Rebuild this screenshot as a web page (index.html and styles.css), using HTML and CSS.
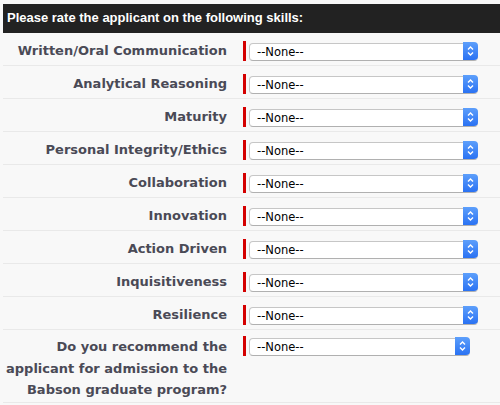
FILE: index.html
```html
<!DOCTYPE html>
<html>
<head>
<meta charset="utf-8">
<link rel="stylesheet" href="styles.css">
</head>
<body>
<div class="section">
  <h3 class="section-title">Please rate the applicant on the following skills:</h3>
  <div class="rows">
    <div class="row"><label class="lbl">Written/Oral Communication</label><div class="field"><span class="req"></span><div class="sel"><select><option>--None--</option></select><span class="btn"><svg width="15" height="18" viewBox="0 0 15 18"><path d="M5 7.5 L7.5 5 L10 7.5 M5 10.5 L7.5 13 L10 10.5" fill="none" stroke="#fff" stroke-width="1.4"/></svg></span></div></div></div>
    <div class="row"><label class="lbl">Analytical Reasoning</label><div class="field"><span class="req"></span><div class="sel"><select><option>--None--</option></select><span class="btn"><svg width="15" height="18" viewBox="0 0 15 18"><path d="M5 7.5 L7.5 5 L10 7.5 M5 10.5 L7.5 13 L10 10.5" fill="none" stroke="#fff" stroke-width="1.4"/></svg></span></div></div></div>
    <div class="row"><label class="lbl">Maturity</label><div class="field"><span class="req"></span><div class="sel"><select><option>--None--</option></select><span class="btn"><svg width="15" height="18" viewBox="0 0 15 18"><path d="M5 7.5 L7.5 5 L10 7.5 M5 10.5 L7.5 13 L10 10.5" fill="none" stroke="#fff" stroke-width="1.4"/></svg></span></div></div></div>
    <div class="row"><label class="lbl">Personal Integrity/Ethics</label><div class="field"><span class="req"></span><div class="sel"><select><option>--None--</option></select><span class="btn"><svg width="15" height="18" viewBox="0 0 15 18"><path d="M5 7.5 L7.5 5 L10 7.5 M5 10.5 L7.5 13 L10 10.5" fill="none" stroke="#fff" stroke-width="1.4"/></svg></span></div></div></div>
    <div class="row"><label class="lbl">Collaboration</label><div class="field"><span class="req"></span><div class="sel"><select><option>--None--</option></select><span class="btn"><svg width="15" height="18" viewBox="0 0 15 18"><path d="M5 7.5 L7.5 5 L10 7.5 M5 10.5 L7.5 13 L10 10.5" fill="none" stroke="#fff" stroke-width="1.4"/></svg></span></div></div></div>
    <div class="row"><label class="lbl">Innovation</label><div class="field"><span class="req"></span><div class="sel"><select><option>--None--</option></select><span class="btn"><svg width="15" height="18" viewBox="0 0 15 18"><path d="M5 7.5 L7.5 5 L10 7.5 M5 10.5 L7.5 13 L10 10.5" fill="none" stroke="#fff" stroke-width="1.4"/></svg></span></div></div></div>
    <div class="row"><label class="lbl">Action Driven</label><div class="field"><span class="req"></span><div class="sel"><select><option>--None--</option></select><span class="btn"><svg width="15" height="18" viewBox="0 0 15 18"><path d="M5 7.5 L7.5 5 L10 7.5 M5 10.5 L7.5 13 L10 10.5" fill="none" stroke="#fff" stroke-width="1.4"/></svg></span></div></div></div>
    <div class="row"><label class="lbl">Inquisitiveness</label><div class="field"><span class="req"></span><div class="sel"><select><option>--None--</option></select><span class="btn"><svg width="15" height="18" viewBox="0 0 15 18"><path d="M5 7.5 L7.5 5 L10 7.5 M5 10.5 L7.5 13 L10 10.5" fill="none" stroke="#fff" stroke-width="1.4"/></svg></span></div></div></div>
    <div class="row"><label class="lbl">Resilience</label><div class="field"><span class="req"></span><div class="sel"><select><option>--None--</option></select><span class="btn"><svg width="15" height="18" viewBox="0 0 15 18"><path d="M5 7.5 L7.5 5 L10 7.5 M5 10.5 L7.5 13 L10 10.5" fill="none" stroke="#fff" stroke-width="1.4"/></svg></span></div></div></div>
    <div class="row row-tall"><label class="lbl">Do you recommend the applicant for admission to the Babson graduate program?</label><div class="field"><span class="req"></span><div class="sel sel-narrow"><select><option>--None--</option></select><span class="btn"><svg width="15" height="18" viewBox="0 0 15 18"><path d="M5 7.5 L7.5 5 L10 7.5 M5 10.5 L7.5 13 L10 10.5" fill="none" stroke="#fff" stroke-width="1.4"/></svg></span></div></div></div>
  </div>
</div>
</body>
</html>
```
FILE: styles.css
```css
html, body {
  margin: 0;
  padding: 0;
  background: #f8f8f8;
}
.section {
  margin: 4px 0 0 3px;
}
.section-title {
  margin: 0;
  height: 29px;
  line-height: 27px;
  padding-left: 4px;
  background: #222222;
  color: #ffffff;
  font-family: "Liberation Sans", Arial, sans-serif;
  font-weight: bold;
  font-size: 13px;
}
.row {
  display: flex;
  align-items: flex-start;
  padding: 8px 0 4px;
  border-bottom: 1px solid #e9e9e9;
}
.lbl {
  width: 224px;
  padding-right: 16px;
  text-align: right;
  font-family: "DejaVu Sans", Verdana, sans-serif;
  font-weight: bold;
  font-size: 13px;
  line-height: 19px;
  color: #4a4a56;
}
.field {
  display: flex;
  align-items: flex-start;
  gap: 3px;
}
.req {
  display: block;
  width: 3px;
  height: 20px;
  background: #d40000;
}
.sel {
  position: relative;
  width: 229px;
  height: 18px;
  margin-top: 1px;
}
.sel-narrow {
  width: 221px;
}
.sel select {
  -webkit-appearance: none;
  appearance: none;
  box-sizing: border-box;
  width: 100%;
  height: 18px;
  margin: 0;
  padding: 0 0 0 7px;
  border: 1px solid #c6c6c6;
  border-bottom-color: #b0b0b0;
  border-radius: 4px;
  background: #ffffff;
  font-family: "DejaVu Sans", sans-serif;
  font-size: 11.5px;
  color: #000;
  line-height: 16px;
}
.btn {
  position: absolute;
  top: 0;
  right: 0;
  width: 15px;
  height: 18px;
  border-radius: 0 4px 4px 0;
  background: linear-gradient(#5d9ffb, #2a72f3);
}
.btn svg {
  display: block;
}
.row-tall {
  padding: 7px 0 1px;
  border-bottom: 1px solid #e9e9e9;
}
.row-tall .lbl {
  line-height: 21.5px;
  margin-top: -1px;
}
.row-tall .req {
  margin-top: -1px;
}
.row-tall .sel {
  margin-top: 0;
}
```
